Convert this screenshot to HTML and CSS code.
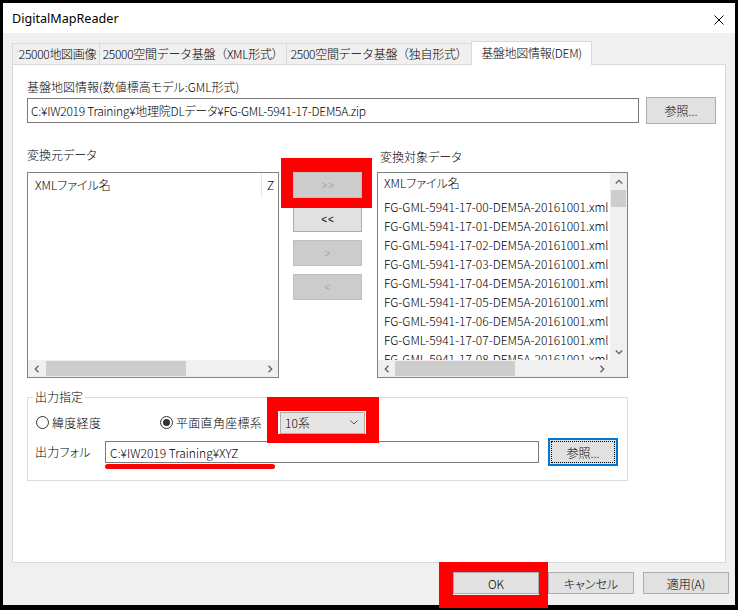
FILE: index.html
```html
<!DOCTYPE html>
<html lang="ja">
<head>
<meta charset="utf-8">
<title>DigitalMapReader</title>
<link rel="stylesheet" href="styles.css">
</head>
<body>
<div class="frame">
  <div class="window">
    <div class="titlebar">
      <span class="title">DigitalMapReader</span>
      <svg class="close" viewBox="0 0 10 10"><path d="M0.5 0.5 L9.5 9.5 M9.5 0.5 L0.5 9.5" stroke="#000" stroke-width="1" fill="none"/></svg>
    </div>
    <div class="client">
      <div class="tabs">
        <div class="tab t1">25000地図画像</div>
        <div class="tab t2">25000空間データ基盤（XML形式）</div>
        <div class="tab t3">2500空間データ基盤（独自形式）</div>
        <div class="tab active">基盤地図情報(DEM)</div>
      </div>
      <div class="panel">
        <div class="lbl top-lbl">基盤地図情報(数値標高モデル:GML形式)</div>
        <div class="file-row">
          <div class="textbox path">C:¥IW2019 Training¥地理院DLデータ¥FG-GML-5941-17-DEM5A.zip</div>
          <div class="btn browse">参照...</div>
        </div>
        <div class="lists">
          <div class="col left-col">
            <div class="lbl left-lbl">変換元データ</div>
            <div class="listbox lb-left">
              <div class="lhead">
                <div class="hcol1">XMLファイル名</div>
                <div class="hcol2">Z</div>
              </div>
              <div class="lbody"></div>
              <div class="hscroll">
                <div class="sarrow"><svg viewBox="0 0 6 8"><path d="M4.5 0.8 L1.3 4 L4.5 7.2" stroke="#606060" stroke-width="1.3" fill="none"/></svg></div>
                <div class="htrack"><div class="hthumb thumb-left"></div></div>
                <div class="sarrow"><svg viewBox="0 0 6 8"><path d="M1.5 0.8 L4.7 4 L1.5 7.2" stroke="#606060" stroke-width="1.3" fill="none"/></svg></div>
              </div>
            </div>
          </div>
          <div class="mid">
            <div class="mbtn disabled">&gt;&gt;</div>
            <div class="mbtn">&lt;&lt;</div>
            <div class="mbtn disabled">&gt;</div>
            <div class="mbtn disabled">&lt;</div>
          </div>
          <div class="col right-col">
            <div class="lbl right-lbl">変換対象データ</div>
            <div class="listbox lb-right">
              <div class="rmain">
                <div class="rhead">XMLファイル名</div>
                <div class="row">FG-GML-5941-17-00-DEM5A-20161001.xml</div>
                <div class="row">FG-GML-5941-17-01-DEM5A-20161001.xml</div>
                <div class="row">FG-GML-5941-17-02-DEM5A-20161001.xml</div>
                <div class="row">FG-GML-5941-17-03-DEM5A-20161001.xml</div>
                <div class="row">FG-GML-5941-17-04-DEM5A-20161001.xml</div>
                <div class="row">FG-GML-5941-17-05-DEM5A-20161001.xml</div>
                <div class="row">FG-GML-5941-17-06-DEM5A-20161001.xml</div>
                <div class="row">FG-GML-5941-17-07-DEM5A-20161001.xml</div>
                <div class="row">FG-GML-5941-17-08-DEM5A-20161001.xml</div>
              </div>
              <div class="vscroll">
                <div class="sarrow v"><svg viewBox="0 0 8 6"><path d="M0.8 4.5 L4 1.3 L7.2 4.5" stroke="#606060" stroke-width="1.3" fill="none"/></svg></div>
                <div class="vtrack"><div class="vthumb"></div></div>
                <div class="sarrow v"><svg viewBox="0 0 8 6"><path d="M0.8 1.5 L4 4.7 L7.2 1.5" stroke="#606060" stroke-width="1.3" fill="none"/></svg></div>
              </div>
              <div class="hscroll">
                <div class="sarrow"><svg viewBox="0 0 6 8"><path d="M4.5 0.8 L1.3 4 L4.5 7.2" stroke="#606060" stroke-width="1.3" fill="none"/></svg></div>
                <div class="htrack"><div class="hthumb thumb-right"></div></div>
                <div class="sarrow"><svg viewBox="0 0 6 8"><path d="M1.5 0.8 L4.7 4 L1.5 7.2" stroke="#606060" stroke-width="1.3" fill="none"/></svg></div>
              </div>
              <div class="corner"></div>
            </div>
          </div>
        </div>
        <fieldset class="group">
          <legend>出力指定</legend>
          <div class="radio-row">
            <div class="radio r1"><span class="circle"></span><span class="rtext">緯度経度</span></div>
            <div class="radio r2"><span class="circle on"><span class="dot"></span></span><span class="rtext">平面直角座標系</span></div>
            <div class="combo"><span class="ctext">10系</span><svg class="chev" viewBox="0 0 8 5"><path d="M0.5 0.5 L4 4 L7.5 0.5" stroke="#555" stroke-width="1" fill="none"/></svg></div>
          </div>
          <div class="out-row">
            <div class="out-lbl">出力フォル</div>
            <div class="textbox outpath">C:¥IW2019 Training¥XYZ</div>
            <div class="btn browse2"><span class="focus">参照...</span></div>
          </div>
        </fieldset>
      </div>
      <div class="footer">
        <div class="btn fbtn">OK</div>
        <div class="btn fbtn">キャンセル</div>
        <div class="btn fbtn">適用(A)</div>
      </div>
    </div>
  </div>
  <div class="mark mark-move"></div>
  <div class="mark mark-combo"></div>
  <div class="mark mark-ok"></div>
  <div class="underline"></div>
</div>
</body>
</html>
```

FILE: styles.css
```css
body {
  margin: 0;
  background: #000;
  font-family: "Noto Sans CJK JP", "Noto Sans", sans-serif;
  font-size: 12px;
  font-weight: 300;
  font-feature-settings: "palt" 1;
  color: #000;
}

.frame {
  position: relative;
  width: 738px;
  height: 610px;
  padding: 3px;
  box-sizing: border-box;
  background: #000;
  overflow: hidden;
}

.window {
  width: 732px;
  height: 602px;
  background: #f0f0f0;
  display: flex;
  flex-direction: column;
}

.titlebar {
  height: 30px;
  flex: none;
  background: #fff;
  display: flex;
  align-items: center;
  padding-left: 9px;
}

.title {
  flex: 1;
  line-height: 16px;
  margin-top: 2px;
  font-family: "Noto Sans", sans-serif;
  font-weight: 400;
  font-size: 12.6px;
}

.close {
  width: 10px;
  height: 10px;
  margin-right: 11px;
  margin-top: 4px;
}

.client {
  flex: 1;
  display: flex;
  flex-direction: column;
  padding: 8px 0 0 9px;
}

.tabs {
  display: flex;
  align-items: flex-end;
  height: 23px;
  position: relative;
  z-index: 1;
}

.tab {
  height: 21px;
  box-sizing: border-box;
  border: 1px solid #d9d9d9;
  border-bottom: none;
  margin-right: -1px;
  background: #f0f0f0;
  display: flex;
  align-items: center;
  justify-content: center;
  white-space: nowrap;
  line-height: 16px;
  font-feature-settings: normal;
  letter-spacing: -0.3px;
}

.t1 { width: 88px; padding-left: 3px; }
.t2 { width: 188px; }
.t3 { width: 186px; }

.tab.active {
  width: 121px;
  height: 24px;
  margin-bottom: -1px;
  background: #fff;
  padding-bottom: 2px;
}

.panel {
  width: 714px;
  height: 499px;
  box-sizing: border-box;
  border: 1px solid #d9d9d9;
  background: #fff;
  padding-left: 14px;
}

.lbl {
  line-height: 16px;
  white-space: nowrap;
}

.top-lbl {
  margin-top: 14px;
}

.file-row {
  display: flex;
  align-items: center;
  height: 27px;
  margin-top: 2px;
}

.textbox {
  box-sizing: border-box;
  border: 1px solid #7a7a7a;
  background: #fff;
  white-space: nowrap;
  overflow: hidden;
  display: flex;
  align-items: center;
  padding-left: 3px;
}

.path {
  width: 612px;
  height: 25px;
  letter-spacing: -0.25px;
}

.btn {
  box-sizing: border-box;
  border: 1px solid #adadad;
  background: #e1e1e1;
  display: flex;
  align-items: center;
  justify-content: center;
  white-space: nowrap;
}

.browse {
  width: 70px;
  height: 27px;
  margin-left: 7px;
}

.lists {
  display: flex;
  align-items: flex-start;
  margin-top: 23px;
}

.left-col { width: 252px; }
.right-col { width: 251px; margin-left: 15px; }

.left-lbl { margin-bottom: 9px; }
.right-lbl { margin-top: 2px; margin-bottom: 7px; padding-left: 3px; }

.listbox {
  height: 206px;
  box-sizing: border-box;
  border: 1px solid #828282;
  background: #fff;
  overflow: hidden;
}

.lb-left {
  display: flex;
  flex-direction: column;
}

.lhead {
  height: 24px;
  flex: none;
  display: flex;
}

.hcol1 {
  width: 234px;
  box-sizing: border-box;
  border-right: 1px solid #e5e5e5;
  padding: 4px 0 0 7px;
  line-height: 16px;
  flex: none;
}

.hcol2 {
  padding: 4px 0 0 5px;
  line-height: 16px;
  white-space: nowrap;
}

.lbody { flex: 1; }

.hscroll {
  height: 17px;
  flex: none;
  background: #f0f0f0;
  display: flex;
}

.sarrow {
  width: 17px;
  height: 17px;
  flex: none;
  display: flex;
  align-items: center;
  justify-content: center;
}

.sarrow svg {
  width: 6px;
  height: 8px;
}

.sarrow.v svg {
  width: 8px;
  height: 6px;
}

.htrack {
  flex: 1;
  display: flex;
  align-items: center;
}

.hthumb {
  height: 15px;
  background: #cdcdcd;
}

.thumb-left { width: 140px; margin-left: 1px; }
.thumb-right { width: 120px; }

.mid {
  width: 69px;
  margin-left: 14px;
  padding-top: 25px;
  display: flex;
  flex-direction: column;
  gap: 8px;
}

.mbtn {
  height: 26px;
  box-sizing: border-box;
  border: 1px solid #adadad;
  background: #e1e1e1;
  display: flex;
  align-items: center;
  justify-content: center;
  font-family: "Liberation Sans", sans-serif;
  font-weight: 400;
  font-size: 10px;
  letter-spacing: 1px;
  padding-left: 1px;
}

.mbtn.disabled {
  background: #cccccc;
  border-color: #bfbfbf;
  color: #a6a6a6;
}

.lb-right {
  display: grid;
  grid-template-columns: 1fr 17px;
  grid-template-rows: 1fr 17px;
}

.rmain {
  overflow: hidden;
  min-height: 0;
  padding-left: 6px;
}

.rhead {
  height: 24px;
  box-sizing: border-box;
  padding-top: 2px;
  line-height: 16px;
}

.row {
  height: 19px;
  line-height: 19px;
  white-space: nowrap;
}

.vscroll {
  background: #f0f0f0;
  display: flex;
  flex-direction: column;
}

.vtrack { flex: 1; display: flex; justify-content: center; }

.vthumb {
  width: 15px;
  height: 17px;
  background: #cdcdcd;
}

.corner { background: #f0f0f0; }

.group {
  margin: 11px 0 0 0;
  width: 601px;
  box-sizing: border-box;
  border: 1px solid #dcdcdc;
  padding: 6px 0 14px 8px;
  min-width: 0;
}

.group legend {
  padding: 0 2px;
  margin-left: -3px;
  line-height: 16px;
}

.radio-row {
  display: flex;
  align-items: center;
  height: 23px;
}

.radio {
  display: flex;
  align-items: center;
}

.r1 { width: 124px; }

.circle {
  width: 13px;
  height: 13px;
  box-sizing: border-box;
  border: 1px solid #333;
  border-radius: 50%;
  background: #fff;
  display: flex;
  align-items: center;
  justify-content: center;
  flex: none;
}

.dot {
  width: 7px;
  height: 7px;
  border-radius: 50%;
  background: #333;
}

.rtext {
  margin-left: 3px;
  letter-spacing: 0.3px;
  line-height: 16px;
}

.combo {
  margin-left: 18px;
  width: 85px;
  height: 22px;
  box-sizing: border-box;
  border: 1px solid #adadad;
  background: #e5e5e5;
  display: flex;
  align-items: center;
  padding-left: 4px;
}

.ctext {
  flex: 1;
  line-height: 16px;
}

.chev {
  width: 8px;
  height: 5px;
  margin-right: 6px;
}

.out-row {
  display: flex;
  align-items: center;
  height: 28px;
  margin-top: 4px;
  margin-left: -1px;
}

.out-lbl {
  width: 70px;
  line-height: 16px;
  white-space: nowrap;
  letter-spacing: 0.2px;
}

.outpath {
  width: 434px;
  height: 22px;
  padding-left: 4px;
}

.browse2 {
  width: 70px;
  height: 28px;
  margin-left: 9px;
  border: 2px solid #0078d7;
  padding: 1px;
}

.focus {
  width: 100%;
  height: 100%;
  box-sizing: border-box;
  border: 1px dotted #000;
  display: flex;
  align-items: center;
  justify-content: center;
}

.footer {
  display: flex;
  justify-content: flex-end;
  gap: 9px;
  margin-top: 9px;
  padding-right: 6px;
}

.fbtn {
  width: 86px;
  height: 22px;
}

.mark {
  position: absolute;
  box-sizing: border-box;
  border-style: solid;
  border-color: #ff0000;
}

.mark-move {
  left: 281px;
  top: 158px;
  width: 91px;
  height: 50px;
  border-width: 14px 10px 10px 12px;
}

.mark-combo {
  left: 267px;
  top: 397px;
  width: 112px;
  height: 46px;
  border-width: 14px 13px 9px 11px;
}

.mark-ok {
  left: 439px;
  top: 562px;
  width: 109px;
  height: 46px;
  border-width: 10px 9px 13px 14px;
}

.underline {
  position: absolute;
  left: 105px;
  top: 464px;
  width: 170px;
  height: 5px;
  border-radius: 3px;
  background: #ff0000;
}
```
